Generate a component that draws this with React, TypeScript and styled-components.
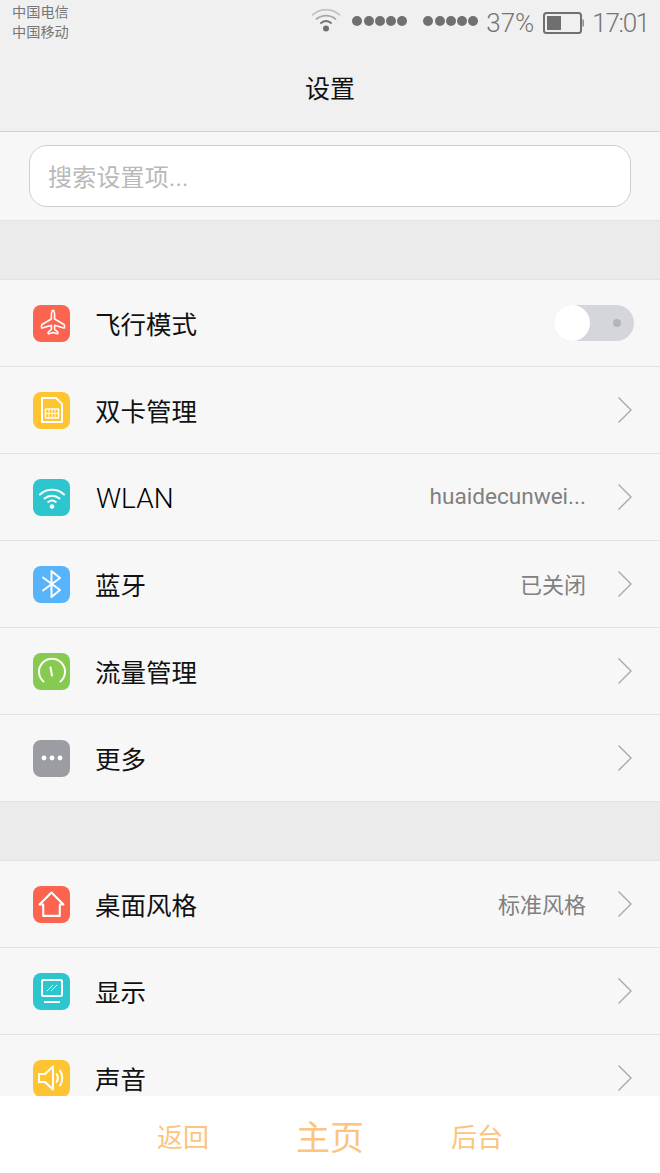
import { ReactNode } from 'react'
import styled, { createGlobalStyle } from 'styled-components'

const GlobalStyle = createGlobalStyle`
  html, body {
    margin: 0;
    padding: 0;
    background: #f7f7f7;
  }
  * {
    box-sizing: border-box;
  }
`

const CJK = `'Roboto', 'Noto Sans CJK SC', 'Liberation Sans', sans-serif`

const Page = styled.div`
  width: 660px;
  height: 1173px;
  display: flex;
  flex-direction: column;
  overflow: hidden;
  font-family: ${CJK};
  background: #f7f7f7;
`

const TopBar = styled.header`
  height: 132px;
  flex: none;
  background: #f0f0f0;
  border-bottom: 1px solid #d2d2d2;
  display: flex;
  flex-direction: column;
`

const StatusBar = styled.div`
  height: 44px;
  display: flex;
  justify-content: space-between;
  padding: 2px 11px 0 12px;
`

const Carriers = styled.div`
  font-size: 14.2px;
  line-height: 20px;
  color: #777;
`

const StatusRight = styled.div`
  display: flex;
  align-items: center;
  height: 42px;
  margin-top: -2px;
  color: #757575;
  font-weight: 300;
  font-size: 26px;
`

const Signal = styled.div<{ $gap: number }>`
  display: flex;
  gap: 1.25px;
  margin-right: ${(p) => p.$gap}px;
`

const Dot = styled.span`
  width: 10px;
  height: 10px;
  border-radius: 50%;
  background: #707070;
`

const Title = styled.h1`
  margin: 0;
  flex: 1;
  display: flex;
  align-items: center;
  justify-content: center;
  padding-bottom: 2px;
  font-size: 25px;
  font-weight: 400;
  color: #111;
`

const SearchSection = styled.div`
  height: 89px;
  flex: none;
  padding: 13px 29px 0;
  background: #f7f7f7;
  border-bottom: 1px solid #e2e2e2;
`

const SearchBox = styled.div`
  height: 62px;
  background: #fff;
  border: 1px solid #cfcfcf;
  border-radius: 18px;
  padding: 0 0 2px 18px;
  display: flex;
  align-items: center;
  font-size: 24px;
  letter-spacing: 0.2px;
  color: #b9b9b9;
`

const Gap = styled.div`
  height: 59px;
  flex: none;
  background: #ebebeb;
  border-bottom: 1px solid #e2e2e2;
`

const Body = styled.div`
  flex: 1;
  min-height: 0;
  overflow: hidden;
`

const Row = styled.div`
  height: 87px;
  display: flex;
  align-items: center;
  padding: 0 27px 0 33px;
  background: #f7f7f7;
  border-bottom: 1px solid #e3e3e3;
`

const IconTile = styled.div<{ $bg: string }>`
  width: 37px;
  height: 37px;
  flex: none;
  border-radius: 8px;
  background: ${(p) => p.$bg};
  display: flex;
  align-items: center;
  justify-content: center;
`

const RowLabel = styled.div<{ $latin?: boolean }>`
  margin: ${(p) => (p.$latin ? '2px 0 0 26px' : '-1px 0 0 25px')};
  flex: 1;
  font-size: ${(p) => (p.$latin ? 28 : 25.5)}px;
  font-weight: ${(p) => (p.$latin ? 300 : 400)};
  color: ${(p) => (p.$latin ? '#000' : '#111')};
`

const RowValue = styled.div<{ $latin?: boolean }>`
  font-size: ${(p) => (p.$latin ? 22.6 : 22)}px;
  color: #808080;
  margin: -2px 31px 0 0;
`

const Switch = styled.div`
  width: 80px;
  height: 36px;
  margin-right: -1px;
  border-radius: 18px;
  background: #d5d6db;
  position: relative;
`

const Knob = styled.span`
  position: absolute;
  left: 0;
  top: 0;
  width: 36px;
  height: 36px;
  border-radius: 50%;
  background: #fff;
`

const SwitchDot = styled.span`
  position: absolute;
  right: 13px;
  top: 14px;
  width: 8px;
  height: 8px;
  border-radius: 50%;
  background: #b4b5ba;
`

const BottomNav = styled.nav`
  height: 77px;
  flex: none;
  background: #fff;
  display: flex;
  justify-content: center;
  align-items: center;
  gap: 87px;
  padding-top: 2px;
  color: #fcc47d;
`

const NavItem = styled.div<{ $large?: boolean }>`
  font-size: ${(p) => (p.$large ? 34 : 26)}px;
`

const stroke = {
  fill: 'none',
  stroke: '#fff',
  strokeWidth: 2,
  strokeLinecap: 'round' as const,
  strokeLinejoin: 'round' as const,
}

const Chevron = () => (
  <svg width="16" height="28" viewBox="0 0 16 28">
    <path d="M1.5 1.5 L14 14 L1.5 26.5" fill="none" stroke="#a8a8a8" strokeWidth="1.4" />
  </svg>
)

const PlaneIcon = () => (
  <svg width="28" height="28" viewBox="0 0 28 28" {...stroke} strokeWidth={1.6}>
    <path d="M14 1.5c1.600 0 2.600 2 2.600 4v4.500l9 5.200c.6.4.9 1 .9 1.600v1.700c0 .4-.4.6-.8.5l-9.100-2.800v4.200l3 2.400c.4.3.5 1.900-.2 1.900h-.3l-4.100-1.200-4.100 1.200h-.3c-.7 0-.6-1.600-.2-1.900l3-2.400v-4.200l-9.100 2.800c-.4.1-.8-.1-.8-.5v-1.700c0-.6.3-1.200.9-1.600l9-5.200V5.500c0-2 1-4 2.600-4z" />
  </svg>
)

const SimIcon = () => (
  <svg width="24" height="28" viewBox="0 0 24 28" {...stroke} strokeLinecap="butt">
    <path d="M2 2h14l6 6v18H2z" />
    <rect x="5.500" y="13" width="13" height="9" strokeWidth="1.500" />
    <path d="M5.500 17.500h13M9 13v9M12 13v9M15 13v9" strokeWidth="1" />
  </svg>
)

const WifiIcon = () => (
  <svg width="28" height="28" viewBox="0 0 28 28" fill="none" stroke="#fff" strokeWidth="2" strokeLinecap="round">
    <path d="M2 11.500c6.700-6.200 17.300-6.200 24 0" />
    <path d="M6.500 15.500c4.400-3.800 10.600-3.800 15 0" />
    <path d="M10.200 19c2.300-1.700 5.300-1.700 7.600 0" />
    <circle cx="14" cy="23.500" r="2.300" fill="#fff" stroke="none" />
  </svg>
)

const BluetoothIcon = () => (
  <svg width="24" height="30" viewBox="0 0 24 30" {...stroke}>
    <path d="M3 8.500 L20 21 L11.500 28 V2 L20 9 L3 21.500" />
  </svg>
)

const GaugeIcon = () => (
  <svg width="30" height="30" viewBox="0 0 30 30" {...stroke}>
    <path d="M6.500 25.500A13 13 0 1 1 23.500 25.500" />
    <path d="M13.500 11.500l1.500 8" />
  </svg>
)

const MoreIcon = () => (
  <svg width="24" height="8" viewBox="0 0 24 8">
    <circle cx="4" cy="4" r="2.400" fill="#fff" />
    <circle cx="12" cy="4" r="2.400" fill="#fff" />
    <circle cx="20" cy="4" r="2.400" fill="#fff" />
  </svg>
)

const HomeIcon = () => (
  <svg width="29" height="29" viewBox="0 0 28 28" {...stroke} strokeLinecap="butt">
    <path d="M14 2.500L2.500 14h3.500v11h16V14h3.500z" />
  </svg>
)

const DisplayIcon = () => (
  <svg width="26" height="26" viewBox="0 0 26 26" {...stroke} strokeLinecap="butt">
    <rect x="3" y="2" width="20" height="16" rx="1.500" />
    <path d="M5 24h16" />
    <path d="M8 13l6-6M12 13l6-6" strokeWidth="1" />
  </svg>
)

const SpeakerIcon = () => (
  <svg width="30" height="30" viewBox="0 0 30 30" {...stroke}>
    <path d="M2 11h6l8-7.500v23L8 19H2z" />
    <path d="M19.500 11c1.600 2.400 1.600 5.600 0 8" />
    <path d="M23 7.500c3 4.400 3 10.600 0 15" />
  </svg>
)

const BatteryIcon = () => (
  <svg width="42" height="22" viewBox="0 0 42 22">
    <rect x="1" y="1" width="37" height="20" rx="2.500" fill="none" stroke="#6f6f6f" strokeWidth="2" />
    <rect x="4" y="4" width="14" height="14" fill="#6f6f6f" />
    <path d="M39.500 7.500h1.200v7h-1.200z" fill="#6f6f6f" />
  </svg>
)

const StatusWifi = () => (
  <svg width="30" height="24" viewBox="0 0 30 24" fill="none" strokeLinecap="round">
    <path d="M1.500 7c7.500-7 19.500-7 27 0" stroke="#bdbdbd" strokeWidth="1.600" />
    <path d="M5.500 11c5.500-4.600 13.500-4.600 19 0" stroke="#a8a8a8" strokeWidth="1.800" />
    <path d="M10 15c3-2.300 7-2.300 10 0" stroke="#757575" strokeWidth="2" />
    <circle cx="15" cy="20.500" r="3" fill="#6f6f6f" />
  </svg>
)

const StatusWifiSlot = styled.span`
  display: flex;
  margin: -2px 11px 0 0;
`

const Percent = styled.span`
  margin: 3px 9px 0 0;
`

const BatterySlot = styled.span`
  display: flex;
  margin-top: 4px;
`

const Clock = styled.span`
  margin: 3px 0 0 7px;
  letter-spacing: -1.300px;
`

type Item = {
  label: string
  bg: string
  icon: ReactNode
  value?: string
  toggle?: boolean
}

const firstGroup: Item[] = [
  { label: '飞行模式', bg: '#fd6450', icon: <PlaneIcon />, toggle: true },
  { label: '双卡管理', bg: '#ffc431', icon: <SimIcon /> },
  { label: 'WLAN', bg: '#2dc6ce', icon: <WifiIcon />, value: 'huaidecunwei...' },
  { label: '蓝牙', bg: '#57b4fb', icon: <BluetoothIcon />, value: '已关闭' },
  { label: '流量管理', bg: '#86cb50', icon: <GaugeIcon /> },
  { label: '更多', bg: '#9c9da3', icon: <MoreIcon /> },
]

const secondGroup: Item[] = [
  { label: '桌面风格', bg: '#fd6450', icon: <HomeIcon />, value: '标准风格' },
  { label: '显示', bg: '#2dc6ce', icon: <DisplayIcon /> },
  { label: '声音', bg: '#ffc431', icon: <SpeakerIcon /> },
]

const SettingRow = ({ item }: { item: Item }) => {
  const latin = item.label === 'WLAN'
  return (
    <Row>
      <IconTile $bg={item.bg}>{item.icon}</IconTile>
      <RowLabel $latin={latin}>{item.label}</RowLabel>
      {item.value && <RowValue $latin={latin}>{item.value}</RowValue>}
      {item.toggle ? (
        <Switch>
          <Knob />
          <SwitchDot />
        </Switch>
      ) : (
        <Chevron />
      )}
    </Row>
  )
}

const App = () => (
  <Page>
    <GlobalStyle />
    <TopBar>
      <StatusBar>
        <Carriers>
          中国电信
          <br />
          中国移动
        </Carriers>
        <StatusRight>
          <StatusWifiSlot>
            <StatusWifi />
          </StatusWifiSlot>
          <Signal $gap={16}>
            {[0, 1, 2, 3, 4].map((i) => (
              <Dot key={i} />
            ))}
          </Signal>
          <Signal $gap={8}>
            {[0, 1, 2, 3, 4].map((i) => (
              <Dot key={i} />
            ))}
          </Signal>
          <Percent>37%</Percent>
          <BatterySlot>
            <BatteryIcon />
          </BatterySlot>
          <Clock>17:01</Clock>
        </StatusRight>
      </StatusBar>
      <Title>设置</Title>
    </TopBar>
    <SearchSection>
      <SearchBox>搜索设置项...</SearchBox>
    </SearchSection>
    <Body>
      <Gap />
      {firstGroup.map((item) => (
        <SettingRow key={item.label} item={item} />
      ))}
      <Gap />
      {secondGroup.map((item) => (
        <SettingRow key={item.label} item={item} />
      ))}
    </Body>
    <BottomNav>
      <NavItem>返回</NavItem>
      <NavItem $large>主页</NavItem>
      <NavItem>后台</NavItem>
    </BottomNav>
  </Page>
)

export default App
